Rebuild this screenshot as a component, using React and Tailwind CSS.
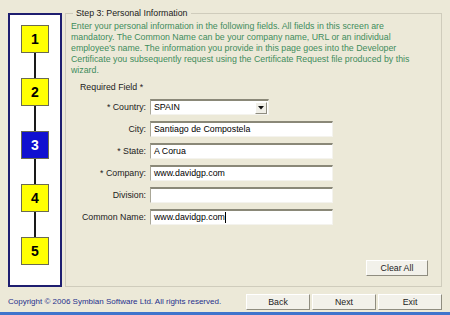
import React from "react";

const font = { fontFamily: '"Liberation Sans", Arial, sans-serif' };

function StepBox({ n, active }) {
  return (
    <div
      className={
        "w-[28px] h-[28px] flex items-center justify-center border border-[#6b6b50] text-[14px] font-bold " +
        (active ? "bg-[#1010d0] text-white" : "bg-[#ffff00] text-black")
      }
    >
      {n}
    </div>
  );
}

function Connector() {
  return <div className="w-[2px] h-[25px] bg-[#1a1a1a]" />;
}

function Field({ label, value, caret }) {
  return (
    <div className="flex items-center h-[16px]">
      <div className="w-[79px] pr-[4px] text-right text-[#222] whitespace-nowrap">{label}</div>
      <div className="w-[183px] h-[16px] bg-white border-t-2 border-l border-t-[#8a8878] border-l-[#a9a797] border-b border-r border-b-[#f4f3ee] border-r-[#f4f3ee] flex items-center pl-[3px] text-black">
        {value}
        {caret && <span className="w-px h-[11px] bg-black" />}
      </div>
    </div>
  );
}

function XpButton({ children, className }) {
  return (
    <button
      className={
        "h-[16px] bg-[#f2f1ea] border border-t-white border-l-white border-r-[#8f8d80] border-b-[#8f8d80] text-[#222] text-[8.8px] flex items-center justify-center " +
        className
      }
      style={font}
    >
      {children}
    </button>
  );
}

export default function App() {
  return (
    <div className="w-[450px] h-[315px] bg-[#ece9d8] flex flex-col overflow-hidden text-[8.8px] leading-[11px]" style={font}>
      <div className="flex h-[287px]">
        {/* step list */}
        <div className="ml-[8px] mt-[13px] w-[54px] h-[274px] bg-white border-2 border-[#1e1e70] flex flex-col items-center pt-[10px]">
          <StepBox n="1" />
          <Connector />
          <StepBox n="2" />
          <Connector />
          <StepBox n="3" active />
          <Connector />
          <StepBox n="4" />
          <Connector />
          <StepBox n="5" />
        </div>

        <fieldset className="ml-[3px] mt-[8px] w-[377px] h-[279px] border border-[#cfccbc] pl-[5px] flex flex-col">
          <legend className="ml-[2px] px-[3px] text-[#1a1a1a]">Step 3: Personal Information</legend>
          <p className="mt-[2px] text-[#3f8c5c] whitespace-nowrap">
            Enter your personal information in the following fields. All fields in this screen are
            <br />
            mandatory. The Common Name can be your company name, URL or an individual
            <br />
            employee's name. The information you provide in this page goes into the Developer
            <br />
            Certificate you subsequently request using the Certificate Request file produced by this
            <br />
            wizard.
          </p>
          <div className="mt-[6px] ml-[9px] text-[#222]">Required Field *</div>

          <div className="mt-[6px] flex flex-col gap-[6px]">
            <div className="flex items-center h-[16px]">
              <div className="w-[79px] pr-[4px] text-right text-[#222]">* Country:</div>
              <div className="w-[119px] h-[16px] bg-white border-t-2 border-l border-t-[#8a8878] border-l-[#a9a797] border-b border-r border-b-[#f4f3ee] border-r-[#f4f3ee] flex items-center justify-between pl-[3px] pr-[1px]">
                <span>SPAIN</span>
                <span className="w-[12px] h-[12px] bg-[#f0efe8] border border-t-white border-l-white border-r-[#8f8d80] border-b-[#8f8d80] flex items-center justify-center">
                  <svg width="6" height="4" viewBox="0 0 6 4">
                    <path d="M0 0h6L3 3.5z" fill="#111" />
                  </svg>
                </span>
              </div>
            </div>
            <Field label="City:" value="Santiago de Compostela" />
            <Field label="* State:" value="A Corua" />
            <Field label="* Company:" value="www.davidgp.com" />
            <Field label="Division:" value="" />
            <Field label="Common Name:" value="www.davidgp.com" caret />
          </div>

          <div className="mt-auto mb-[10px] flex justify-end pr-[13px]">
            <XpButton className="w-[62px] h-[15px]">Clear All</XpButton>
          </div>
        </fieldset>
      </div>

      <div className="h-[25px] flex items-end pb-[2px] pl-[8px] pr-[8px]">
        <span className="mb-[3px] text-[#26308c] text-[8px] whitespace-nowrap flex-1">
          Copyright © 2006 Symbian Software Ltd. All rights reserved.
        </span>
        <div className="flex gap-[2px]">
          <XpButton className="w-[64px]">Back</XpButton>
          <XpButton className="w-[64px]">Next</XpButton>
          <XpButton className="w-[64px]">Exit</XpButton>
        </div>
      </div>
      <div className="h-[3px] bg-[#3f74cc]" />
    </div>
  );
}
